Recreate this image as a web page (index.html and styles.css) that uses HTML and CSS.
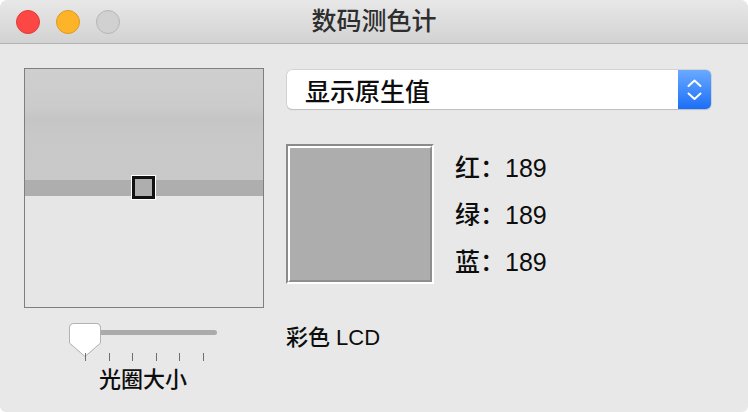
FILE: index.html
```html
<!DOCTYPE html>
<html lang="zh-CN">
<head>
    <meta charset="UTF-8">
    <title>数码测色计</title>
    <link rel="stylesheet" href="styles.css">
</head>
<body>
    <div class="window">
        <div class="titlebar">
            <div class="lights">
                <span class="light red"></span>
                <span class="light yellow"></span>
                <span class="light gray"></span>
            </div>
            <div class="title">数码测色计</div>
            <div></div>
        </div>

        <div class="content">
            <div class="left">
                <div class="preview">
                    <div class="area-top"></div>
                    <div class="area-band"></div>
                    <div class="area-bottom"></div>
                    <div class="aperture"></div>
                </div>

                <div class="slider">
                    <div class="track"></div>
                    <svg class="knob" width="34" height="36" viewBox="0 0 34 36">
                        <path d="M6 1.5 H28 Q32.5 1.5 32.5 6 V21 L17 34.5 L1.5 21 V6 Q1.5 1.5 6 1.5 Z" fill="#ffffff" stroke="#b4b4b4" stroke-width="1"/>
                    </svg>
                    <div class="ticks">
                        <span></span><span></span><span></span><span></span><span></span><span></span>
                    </div>
                </div>
                <div class="slider-label">光圈大小</div>
            </div>

            <div class="right">
                <div class="popup">
                    <span class="popup-text">显示原生值</span>
                    <span class="popup-arrows">
                        <svg width="33" height="39" viewBox="0 0 33 39">
                            <path d="M10.5 16 L16.5 10.5 L22.5 16" fill="none" stroke="#ffffff" stroke-width="2" stroke-linecap="round" stroke-linejoin="round"/>
                            <path d="M10.5 23.5 L16.5 29 L22.5 23.5" fill="none" stroke="#ffffff" stroke-width="2" stroke-linecap="round" stroke-linejoin="round"/>
                        </svg>
                    </span>
                </div>

                <div class="color-row">
                    <div class="swatch"><div class="swatch-fill"></div></div>
                    <div class="values">
                        <div>红：189</div>
                        <div>绿：189</div>
                        <div>蓝：189</div>
                    </div>
                </div>

                <div class="lcd">彩色 LCD</div>
            </div>
        </div>
    </div>
</body>
</html>
```

FILE: styles.css
```css
body {
    margin: 0;
    background: #ffffff;
    font-family: "Liberation Sans", "Noto Sans CJK SC", sans-serif;
    font-weight: 500;
    color: #0d0d0d;
}
.window {
    width: 748px;
    height: 412px;
    background: #e8e8e8;
    border-radius: 8px 8px 6px 6px;
    overflow: hidden;
    display: flex;
    flex-direction: column;
}
.titlebar {
    height: 43px;
    border-bottom: 1px solid #b2b2b2;
    background: linear-gradient(#e9e8e9, #d2d2d2);
    display: grid;
    grid-template-columns: 1fr auto 1fr;
    align-items: center;
}
.lights {
    display: flex;
    gap: 16px;
    padding-left: 16px;
}
.light {
    width: 22px;
    height: 22px;
    border-radius: 50%;
    border: 1px solid;
}
.red {
    background: #fc4744;
    border-color: #de3b38;
}
.yellow {
    background: #fdb428;
    border-color: #df9a1d;
}
.gray {
    background: #d1d1d1;
    border-color: #b6b6b6;
}
.title {
    font-size: 25px;
    color: #2e2e2e;
    line-height: 43px;
}
.content {
    display: flex;
    padding: 24px 0 0 24px;
}
.left {
    width: 240px;
    display: flex;
    flex-direction: column;
}
.preview {
    position: relative;
    width: 238px;
    height: 238px;
    border: 1px solid #7f7f7f;
    display: flex;
    flex-direction: column;
}
.area-top {
    height: 111px;
    background: linear-gradient(#cfcfcf 0%, #cbcbcb 35%, #c5c5c5 45%, #c8c8c8 60%, #c9c9c9 100%);
}
.area-band {
    height: 16px;
    background: #aeaeae;
}
.area-bottom {
    flex: 1;
    background: #e6e6e6;
}
.aperture {
    position: absolute;
    left: 107px;
    top: 107px;
    width: 17px;
    height: 17px;
    background: #aeaeae;
    border: 3px solid #111111;
    outline: 1px solid #ffffff;
}
.slider {
    position: relative;
    height: 46px;
    margin-top: 14px;
}
.track {
    position: absolute;
    left: 60px;
    top: 8px;
    width: 133px;
    height: 5px;
    border-radius: 3px;
    background: #ababab;
}
.knob {
    position: absolute;
    left: 44px;
    top: 0;
    filter: drop-shadow(0 0.5px 0.5px rgba(0, 0, 0, 0.15));
}
.ticks {
    position: absolute;
    left: 61px;
    top: 31px;
    display: flex;
    gap: 22.6px;
}
.ticks span {
    width: 1px;
    height: 8px;
    background: #6e6e6e;
}
.slider-label {
    font-size: 22px;
    line-height: 26px;
    margin-left: 75px;
    margin-top: -1px;
}
.right {
    margin-left: 23px;
    display: flex;
    flex-direction: column;
}
.popup {
    width: 424px;
    height: 39px;
    margin-top: 2px;
    background: #ffffff;
    border-radius: 5px;
    box-shadow: 0 0 0 0.5px #bdbdbd, 0 1px 1px rgba(0, 0, 0, 0.18);
    display: flex;
    align-items: center;
    justify-content: space-between;
    overflow: hidden;
}
.popup-text {
    font-size: 25px;
    padding-left: 18px;
}
.popup-arrows {
    width: 33px;
    height: 39px;
    background: linear-gradient(#6aaaff, #1b6ef7);
}
.popup-arrows svg {
    display: block;
}
.color-row {
    display: flex;
    margin-top: 35px;
}
.swatch {
    width: 144px;
    height: 136px;
    border: 2px solid;
    border-color: #8a8a8a #ffffff #ffffff #8a8a8a;
    margin-left: -1px;
}
.swatch-fill {
    height: 100%;
    background: #adadad;
    border: 2px solid;
    border-color: #ffffff #8e8e8e #8e8e8e #ffffff;
    box-sizing: border-box;
}
.values {
    margin-left: 21px;
    font-size: 25px;
    line-height: 47px;
    margin-top: 1px;
}
.lcd {
    font-size: 22px;
    line-height: 26px;
    margin-top: 39px;
    margin-left: -1px;
}
```
